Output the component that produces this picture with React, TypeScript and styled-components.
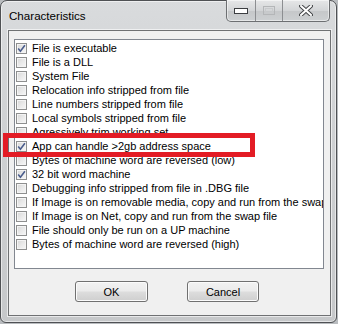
import React from 'react';
import styled, { createGlobalStyle } from 'styled-components';

const GlobalStyle = createGlobalStyle`
  html, body {
    margin: 0;
    padding: 0;
    background: #b9bcbf;
    overflow: hidden;
  }
`;

const Window = styled.div`
  position: relative;
  box-sizing: border-box;
  width: 337px;
  height: 323px;
  display: flex;
  flex-direction: column;
  padding: 0 5px 6px 7px;
  border: 1px solid #4f5154;
  border-radius: 7px 7px 6px 6px;
  background: linear-gradient(180deg, #d9dbdd 0%, #cfd1d3 40%, #c6c8ca 100%);
  box-shadow: inset 0 0 0 1px rgba(255, 255, 255, 0.55);
  font-family: "Liberation Sans", Arial, sans-serif;
`;

const TitleBar = styled.div`
  height: 29px;
  display: flex;
  justify-content: space-between;
  align-items: flex-start;
`;

const Title = styled.div`
  margin: 8px 0 0 1px;
  font-size: 11.6px;
  line-height: 14px;
  color: #000;
`;

const CaptionGroup = styled.div`
  display: flex;
  margin: -1px 1px 0 0;
  height: 21px;
  border: 1px solid #6d6f72;
  border-top: none;
  border-radius: 0 0 5px 5px;
  overflow: hidden;
  background: linear-gradient(180deg, #e6e7e8 0%, #d3d5d7 50%, #c5c7c9 51%, #cdd0d2 100%);
  box-shadow: inset 0 0 0 1px rgba(255, 255, 255, 0.5);
`;

const CaptionButton = styled.div<{ w: number; last?: boolean }>`
  width: ${p => p.w}px;
  display: flex;
  align-items: center;
  justify-content: center;
  border-right: ${p => (p.last ? 'none' : '1px solid #8c8e91')};
`;

const Client = styled.div`
  flex: 1;
  display: flex;
  flex-direction: column;
  padding: 8px 6px 0 5px;
  background: #f0f0f0;
  border: 1px solid #6f7173;
  box-shadow: 0 0 0 1px rgba(255, 255, 255, 0.6);
`;

const ListBox = styled.div`
  box-sizing: border-box;
  width: 310px;
  height: 230px;
  padding-top: 1px;
  background: #fff;
  border: 1px solid #828790;
  overflow: hidden;
`;

const Row = styled.div`
  height: 14px;
  display: flex;
  align-items: center;
  padding-left: 1px;
  white-space: nowrap;
  font-size: 11px;
  color: #000;
`;

const Box = styled.span`
  box-sizing: border-box;
  flex: none;
  width: 11px;
  height: 11px;
  border: 1px solid #8e8f8f;
  background: linear-gradient(135deg, #d6d6d6 0%, #e9e9e9 50%, #f7f7f7 100%);
  box-shadow: inset 0 0 0 1px #f4f4f4;
  display: flex;
  align-items: center;
  justify-content: center;
`;

const Label = styled.span`
  margin-left: 5px;
`;

const ButtonRow = styled.div`
  display: flex;
  justify-content: center;
  gap: 39px;
  margin-top: 12px;
  padding-right: 4px;
`;

const Button = styled.div<{ w: number }>`
  box-sizing: border-box;
  width: ${p => p.w}px;
  height: 21px;
  display: flex;
  align-items: center;
  justify-content: center;
  font-size: 11px;
  color: #000;
  border: 1px solid #707070;
  border-radius: 3px;
  background: linear-gradient(180deg, #f2f2f2 0%, #ebebeb 48%, #dddddd 52%, #cfcfcf 100%);
  box-shadow: inset 0 0 0 1px #fbfbfb;
`;

const Highlight = styled.div`
  position: absolute;
  left: 2px;
  top: 132px;
  width: 252px;
  height: 24px;
  box-sizing: border-box;
  border: 5px solid #e31c25;
`;

const Check = () => (
  <svg width="9" height="9" viewBox="0 0 9 9">
    <path d="M1.2 4.6 L3.4 7.2 L7.9 1.2" fill="none" stroke="#4a5d8c" strokeWidth="1.6" />
  </svg>
);

const items: [string, boolean][] = [
  ['File is executable', true],
  ['File is a DLL', false],
  ['System File', false],
  ['Relocation info stripped from file', false],
  ['Line numbers stripped from file', false],
  ['Local symbols stripped from file', false],
  ['Agressively trim working set', false],
  ['App can handle >2gb address space', true],
  ['Bytes of machine word are reversed (low)', false],
  ['32 bit word machine', true],
  ['Debugging info stripped from file in .DBG file', false],
  ['If Image is on removable media, copy and run from the swap file', false],
  ['If Image is on Net, copy and run from the swap file', false],
  ['File should only be run on a UP machine', false],
  ['Bytes of machine word are reversed (high)', false],
];

const App: React.FC = () => {
  return (
    <>
      <GlobalStyle />
      <Window>
        <TitleBar>
          <Title>Characteristics</Title>
          <CaptionGroup>
            <CaptionButton w={28}>
              <svg width="14" height="6" viewBox="0 0 14 6">
                <rect x="0.5" y="0.5" width="13" height="5" fill="#fff" stroke="#3c3e41" />
              </svg>
            </CaptionButton>
            <CaptionButton w={26}>
              <svg width="12" height="9" viewBox="0 0 12 9">
                <rect x="0.5" y="0.5" width="11" height="8" fill="none" stroke="#b4b6b8" />
                <rect x="2.5" y="2.5" width="7" height="4" fill="none" stroke="#c8cacc" />
              </svg>
            </CaptionButton>
            <CaptionButton w={46} last>
              <svg width="14" height="11" viewBox="0 0 14 11">
                <path d="M2 1 L12 10 M12 1 L2 10" stroke="#45474a" strokeWidth="4" strokeLinecap="round" />
                <path d="M2 1 L12 10 M12 1 L2 10" stroke="#fff" strokeWidth="2" strokeLinecap="round" />
              </svg>
            </CaptionButton>
          </CaptionGroup>
        </TitleBar>
        <Client>
          <ListBox>
            {items.map(([text, checked]) => (
              <Row key={text}>
                <Box>{checked && <Check />}</Box>
                <Label>{text}</Label>
              </Row>
            ))}
          </ListBox>
          <ButtonRow>
            <Button w={73}>OK</Button>
            <Button w={72}>Cancel</Button>
          </ButtonRow>
        </Client>
        <Highlight />
      </Window>
    </>
  );
};

export default App;
